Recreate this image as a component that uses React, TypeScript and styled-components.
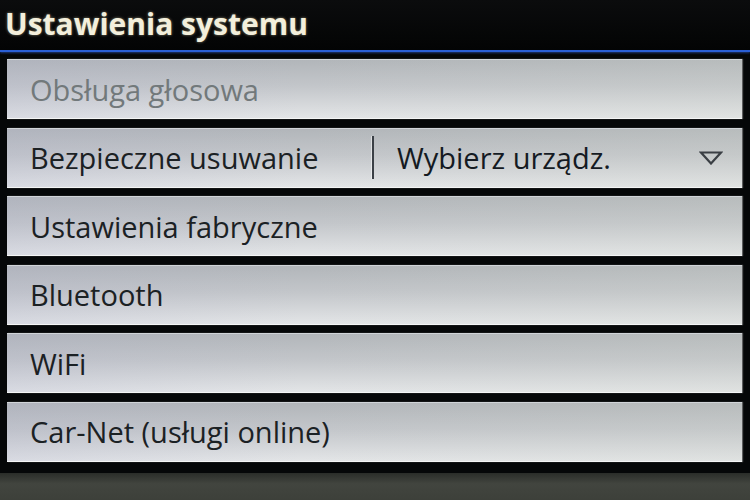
import styled, { createGlobalStyle } from "styled-components";

const GlobalStyle = createGlobalStyle`
  html, body {
    margin: 0;
    padding: 0;
    background: #050708;
  }
  body {
    font-family: "Open Sans", "Noto Sans", sans-serif;
  }
`;

const Screen = styled.div`
  width: 750px;
  height: 500px;
  display: flex;
  flex-direction: column;
  background: #050708;
  overflow: hidden;
`;

const Header = styled.header`
  height: 52px;
  display: flex;
  align-items: center;
  padding: 0 0 3px 5px;
  box-sizing: border-box;
  background: linear-gradient(180deg, #0b0c0d 0%, #030404 100%);
  border-bottom: 2px solid #2a5fd6;
  box-shadow: 0 1px 2px rgba(60, 110, 230, 0.5);
`;

const Title = styled.h1`
  margin: 0;
  font-size: 30px;
  font-weight: 700;
  letter-spacing: 0;
  color: #f3efdc;
  text-shadow: 0 0 3px rgba(240, 230, 190, 0.55);
`;

const List = styled.div`
  display: flex;
  flex-direction: column;
  gap: 8.5px;
  padding: 7px 8px 0 7px;
`;

const Row = styled.div<{ disabled?: boolean }>`
  height: 60px;
  display: flex;
  align-items: center;
  box-sizing: border-box;
  border-top: 1px solid #d0d4d8;
  border-bottom: 1px solid #f4f5f5;
  background: linear-gradient(
      90deg,
      rgba(170, 172, 205, 0.18) 0%,
      rgba(255, 255, 255, 0) 40%,
      rgba(210, 215, 200, 0.18) 100%
    ),
    linear-gradient(180deg, #b2b6ba 0%, #c3c6ca 45%, #e3e5e7 100%);
  box-shadow: 1px 0 1px rgba(255, 255, 255, 0.35);
  color: ${(p) => (p.disabled ? "#72797b" : "#1b2124")};
`;

const Label = styled.span`
  padding-left: 23px;
  font-size: 29px;
  letter-spacing: 0;
  white-space: nowrap;
`;

const SplitLabel = styled(Label)`
  width: 365px;
  flex: none;
  box-sizing: border-box;
`;

const Divider = styled.div`
  width: 2px;
  height: 43px;
  background: #3b4046;
  box-shadow: -1px 0 0 rgba(255, 255, 255, 0.5);
`;

const Select = styled.div`
  flex: 1;
  display: flex;
  align-items: center;
  justify-content: space-between;
  padding: 0 19px 0 23px;
`;

const SelectValue = styled.span`
  font-size: 29px;
  letter-spacing: 0;
  color: #141a22;
`;

const Bezel = styled.div`
  margin-top: auto;
  height: 27px;
  background: linear-gradient(180deg, #2a2d29 0%, #42453f 40%, #3d403a 100%);
`;

function DownArrow() {
  return (
    <svg width="24" height="14" viewBox="0 0 24 14">
      <path
        d="M2 1.5 L22 1.5 L12 12.5 Z"
        fill="none"
        stroke="#3a3f44"
        strokeWidth="2.2"
        strokeLinejoin="miter"
      />
    </svg>
  );
}

const items = [
  "Ustawienia fabryczne",
  "Bluetooth",
  "WiFi",
  "Car-Net (usługi online)",
];

export default function App() {
  return (
    <Screen>
      <GlobalStyle />
      <Header>
        <Title>Ustawienia systemu</Title>
      </Header>
      <List>
        <Row disabled>
          <Label>Obsługa głosowa</Label>
        </Row>
        <Row>
          <SplitLabel>Bezpieczne usuwanie</SplitLabel>
          <Divider />
          <Select>
            <SelectValue>Wybierz urządz.</SelectValue>
            <DownArrow />
          </Select>
        </Row>
        {items.map((label) => (
          <Row key={label}>
            <Label>{label}</Label>
          </Row>
        ))}
      </List>
      <Bezel />
    </Screen>
  );
}
